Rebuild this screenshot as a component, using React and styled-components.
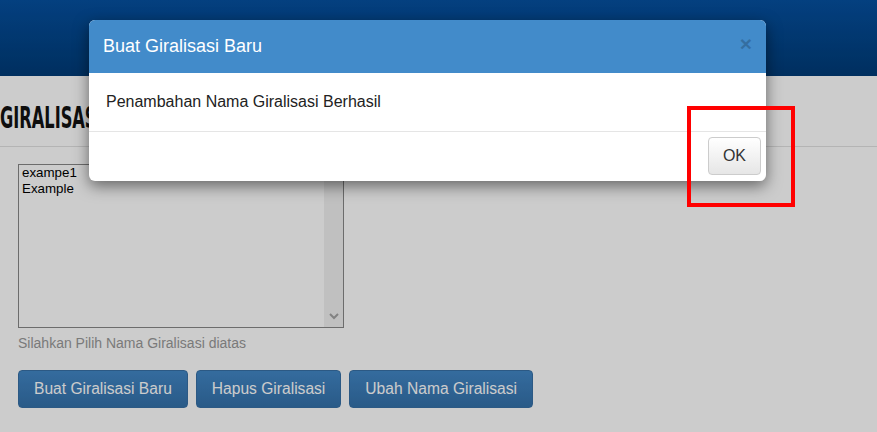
import React from 'react';
import styled, { createGlobalStyle } from 'styled-components';

const GlobalStyle = createGlobalStyle`
  html, body {
    margin: 0;
    padding: 0;
    background: #ffffff;
    font-family: "Liberation Sans", Arial, sans-serif;
    font-size: 16px;
    overflow: hidden;
  }
`;

const PageStyled = styled.div`
  position: relative;
  width: 877px;
  height: 432px;
  overflow: hidden;
  background: #ffffff;
`;

const TopBarStyled = styled.div`
  height: 76px;
  background: linear-gradient(to bottom, #0550a0 0%, #003b77 100%);
`;

const TitleBarStyled = styled.div`
  height: 70px;
  display: flex;
  align-items: center;
  border-bottom: 1px solid #e2e2e2;
`;

const PageTitle = styled.h1`
  margin: 0;
  padding-top: 12px;
  font-family: "Liberation Sans Narrow", "DejaVu Sans Condensed", "Liberation Sans", sans-serif;
  font-weight: bold;
  font-size: 30px;
  color: #121212;
  white-space: nowrap;
  transform: scaleX(0.6);
  transform-origin: left center;
`;

const ContentStyled = styled.div`
  padding: 17px 18px 0;
  display: flex;
  flex-direction: column;
  align-items: flex-start;
`;

const ListBoxStyled = styled.div`
  width: 324px;
  height: 162px;
  border: 1px solid #888888;
  display: flex;
  background: #ffffff;
`;

const ListItems = styled.div`
  flex: 1;
  padding: 0 3px;
  font-family: "Liberation Sans", Arial, sans-serif;
  font-size: 13.33px;
  line-height: 16px;
  color: #000;
`;

const ListOption = styled.div`
  white-space: nowrap;
`;

const ScrollTrack = styled.div`
  width: 19px;
  background: #f1f1f1;
  display: flex;
  flex-direction: column;
  justify-content: flex-end;
  align-items: center;
  padding-bottom: 7px;
  box-sizing: border-box;
`;

const HelpText = styled.p`
  margin: 5px 0 0;
  font-size: 14px;
  line-height: 20px;
  color: #999999;
`;

const ButtonRow = styled.div`
  display: flex;
  gap: 8px;
  margin-top: 17px;
`;

const PrimaryButton = styled.button`
  font-family: "Liberation Sans", Arial, sans-serif;
  font-size: 15.6px;
  line-height: 22px;
  padding: 7px 15px;
  color: #ffffff;
  background: linear-gradient(to bottom, #4287c6 0%, #3471aa 100%);
  border: 1px solid #3770a6;
  border-radius: 4px;
  cursor: pointer;
`;

const Backdrop = styled.div`
  position: absolute;
  inset: 0;
  background: rgba(0, 0, 0, 0.2);
`;

const ModalDialog = styled.div`
  position: absolute;
  left: 89px;
  top: 20px;
  width: 677px;
  background: #ffffff;
  border-radius: 6px;
  box-shadow: 0 5px 15px rgba(0, 0, 0, 0.5);
  overflow: hidden;
`;

const ModalHeader = styled.div`
  display: flex;
  justify-content: space-between;
  align-items: center;
  padding: 14px 14px;
  background: #428bca;
`;

const ModalTitle = styled.h4`
  margin: 0;
  font-size: 18px;
  font-weight: normal;
  line-height: 25px;
  color: #ffffff;
`;

const CloseButton = styled.button`
  border: 0;
  padding: 0;
  background: transparent;
  font-family: "Liberation Sans", Arial, sans-serif;
  font-size: 21px;
  font-weight: bold;
  line-height: 1;
  color: #000;
  opacity: 0.2;
  margin-top: -6px;
  cursor: pointer;
`;

const ModalBody = styled.div`
  padding: 17px 17px;
  line-height: 24px;
  color: #222;
`;

const ModalFooter = styled.div`
  display: flex;
  justify-content: flex-end;
  padding: 5px 5px 6px;
  border-top: 1px solid #e5e5e5;
`;

const DefaultButton = styled.button`
  font-family: "Liberation Sans", Arial, sans-serif;
  font-size: 16px;
  line-height: 22px;
  padding: 7px 14px;
  color: #333;
  background: linear-gradient(to bottom, #ffffff 0%, #e6e6e6 100%);
  border: 1px solid #cccccc;
  border-radius: 4px;
  cursor: pointer;
`;

const Highlight = styled.div`
  position: absolute;
  left: 687px;
  top: 106px;
  width: 100px;
  height: 93px;
  border: 4px solid #ff0000;
  pointer-events: none;
`;

const giralisasi = ['exampe1', 'Example'];

export default function App() {
  return (
    <PageStyled>
      <GlobalStyle />
      <TopBarStyled />
      <TitleBarStyled>
        <PageTitle>GIRALISASI</PageTitle>
      </TitleBarStyled>
      <ContentStyled>
        <ListBoxStyled>
          <ListItems>
            {giralisasi.map(item => <ListOption key={item}>{item}</ListOption>)}
          </ListItems>
          <ScrollTrack>
            <svg width="10" height="7" viewBox="0 0 10 7">
              <path d="M1 1 L5 5 L9 1" fill="none" stroke="#a3a3a3" strokeWidth="2" />
            </svg>
          </ScrollTrack>
        </ListBoxStyled>
        <HelpText>Silahkan Pilih Nama Giralisasi diatas</HelpText>
        <ButtonRow>
          <PrimaryButton>Buat Giralisasi Baru</PrimaryButton>
          <PrimaryButton>Hapus Giralisasi</PrimaryButton>
          <PrimaryButton>Ubah Nama Giralisasi</PrimaryButton>
        </ButtonRow>
      </ContentStyled>
      <Backdrop />
      <ModalDialog>
        <ModalHeader>
          <ModalTitle>Buat Giralisasi Baru</ModalTitle>
          <CloseButton>×</CloseButton>
        </ModalHeader>
        <ModalBody>Penambahan Nama Giralisasi Berhasil</ModalBody>
        <ModalFooter>
          <DefaultButton>OK</DefaultButton>
        </ModalFooter>
      </ModalDialog>
      <Highlight />
    </PageStyled>
  );
}
